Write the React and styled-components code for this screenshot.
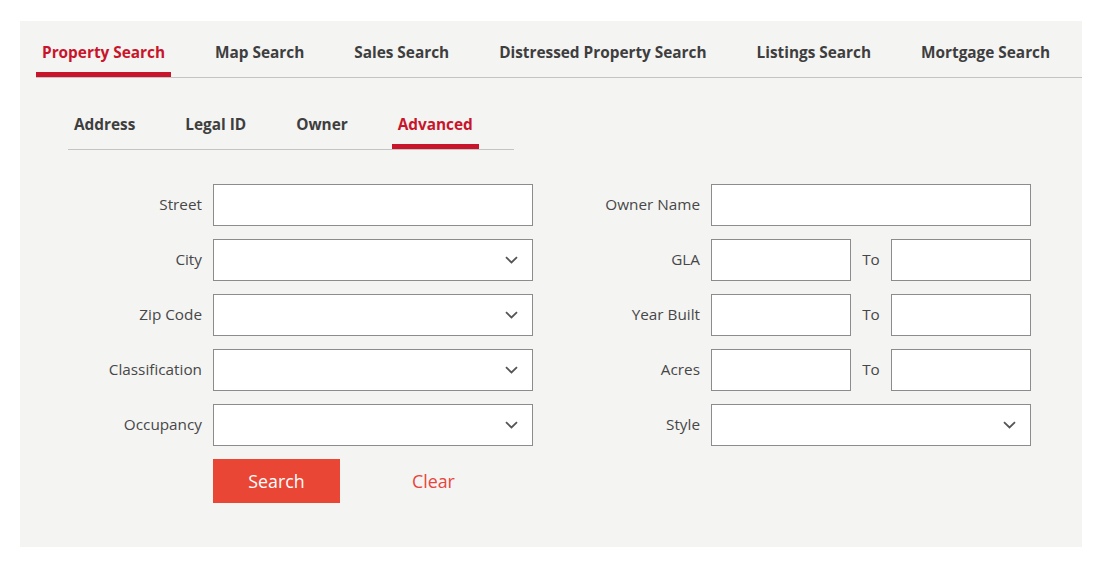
import React from 'react';
import styled, { createGlobalStyle } from 'styled-components';

const GlobalStyle = createGlobalStyle`
  html, body {
    margin: 0;
    padding: 0;
    background: #ffffff;
    font-family: 'Open Sans', 'Liberation Sans', Arial, sans-serif;
  }
  * { box-sizing: border-box; }
`;

const mainTabs = [
  'Property Search',
  'Map Search',
  'Sales Search',
  'Distressed Property Search',
  'Listings Search',
  'Mortgage Search',
];

const subTabs = ['Address', 'Legal ID', 'Owner', 'Advanced'];

const Chevron = () => (
  <svg width="13" height="8" viewBox="0 0 13 8" fill="none">
    <path d="M1 1.2 L6.5 6.5 L12 1.2" stroke="#555" strokeWidth="1.8" />
  </svg>
);

const Select = () => (
  <SelectBox>
    <Chevron />
  </SelectBox>
);

const Range = () => (
  <RangeWrap>
    <Input />
    <ToLabel>To</ToLabel>
    <Input />
  </RangeWrap>
);

const App = () => {
  return (
    <>
      <GlobalStyle />
      <Page>
        <Panel>
          <TabBar>
            {mainTabs.map((t, i) => (
              <Tab key={t} $active={i === 0}>
                {t}
              </Tab>
            ))}
          </TabBar>
          <SubTabBar>
            {subTabs.map((t) => (
              <Tab key={t} $active={t === 'Advanced'}>
                {t}
              </Tab>
            ))}
          </SubTabBar>

          <Form>
            <Label>Street</Label>
            <Input />
            <Label>Owner Name</Label>
            <Input />

            <Label>City</Label>
            <Select />
            <Label>GLA</Label>
            <Range />

            <Label>Zip Code</Label>
            <Select />
            <Label>Year Built</Label>
            <Range />

            <Label>Classification</Label>
            <Select />
            <Label>Acres</Label>
            <Range />

            <Label>Occupancy</Label>
            <Select />
            <Label>Style</Label>
            <Select />

            <span />
            <Actions>
              <SearchButton>Search</SearchButton>
              <ClearButton>Clear</ClearButton>
            </Actions>
          </Form>
        </Panel>
      </Page>
    </>
  );
};

const Page = styled.div`
  width: 1101px;
  height: 567px;
  padding: 21px 19px 20px 20px;
`;

const Panel = styled.div`
  width: 1062px;
  height: 526px;
  background: #f4f4f3;
`;

const TabBar = styled.div`
  display: flex;
  gap: 38px;
  margin-left: 16px;
  padding-top: 22px;
  border-bottom: 1px solid #c4c4c4;
`;

const Tab = styled.div`
  padding: 0 6px 9px;
  font-size: 15.4px;
  letter-spacing: -0.02px;
  line-height: 20px;
  font-weight: 700;
  color: ${(p) => (p.$active ? '#c8152b' : '#3e3e3e')};
  border-bottom: 5px solid ${(p) => (p.$active ? '#c8152b' : 'transparent')};
  white-space: nowrap;
`;

const SubTabBar = styled(TabBar)`
  width: 446px;
  margin-left: 48px;
  padding-top: 37px;
`;

const Form = styled.div`
  display: grid;
  grid-template-columns: 182px 320px 156px 320px;
  grid-auto-rows: 42px;
  column-gap: 11px;
  row-gap: 13px;
  margin-top: 34px;
`;

const Label = styled.label`
  display: flex;
  align-items: center;
  justify-content: flex-end;
  padding-bottom: 2px;
  font-size: 15.3px;
  color: #474747;
`;

const Input = styled.div`
  height: 42px;
  background: #ffffff;
  border: 1px solid #8c8c8c;
`;

const SelectBox = styled(Input)`
  display: flex;
  align-items: center;
  justify-content: flex-end;
  padding-right: 14px;
`;

const RangeWrap = styled.div`
  display: grid;
  grid-template-columns: 140px 40px 140px;
`;

const ToLabel = styled(Label)`
  justify-content: center;
`;

const Actions = styled.div`
  display: flex;
  align-items: center;
  gap: 40px;
  height: 44px;
`;

const SearchButton = styled.button`
  width: 127px;
  height: 44px;
  border: none;
  background: #ea4635;
  color: #ffffff;
  font-family: inherit;
  font-size: 17.8px;
  cursor: pointer;
`;

const ClearButton = styled.button`
  padding: 0 32px;
  height: 44px;
  border: none;
  background: none;
  color: #e8453c;
  font-family: inherit;
  font-size: 17.8px;
  cursor: pointer;
`;

export default App;
